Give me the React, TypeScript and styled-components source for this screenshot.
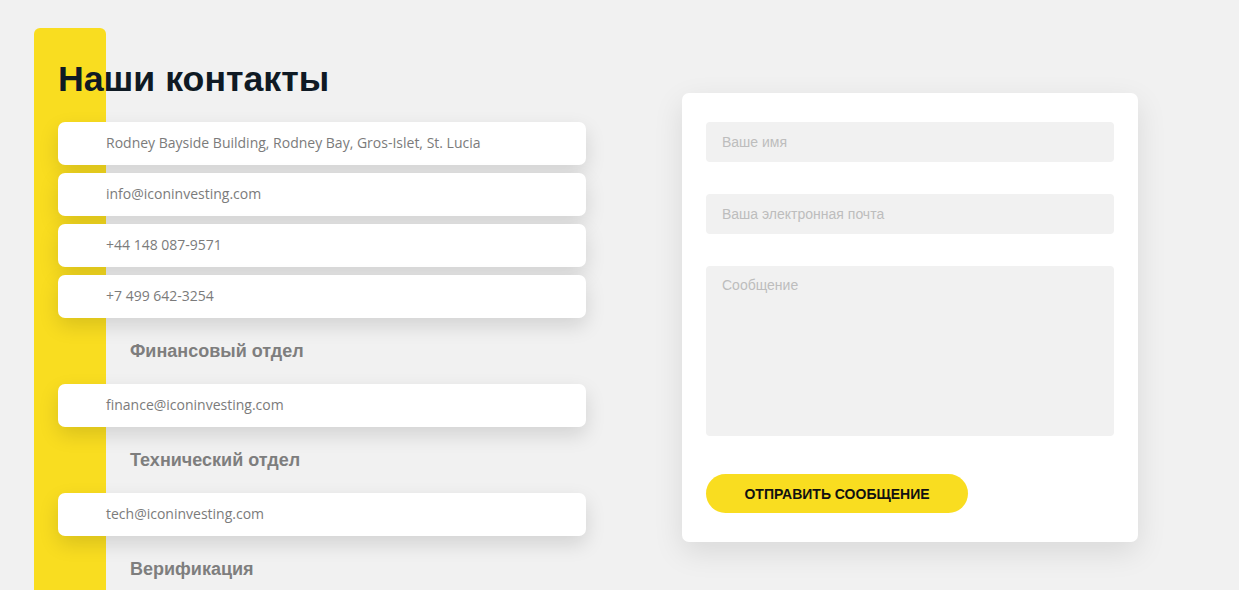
import React from 'react';
import styled, { createGlobalStyle } from 'styled-components';

const GlobalStyle = createGlobalStyle`
  html, body {
    margin: 0;
    padding: 0;
    background: #f1f1f1;
  }
  * {
    box-sizing: border-box;
  }
`;

const contacts = [
  'Rodney Bayside Building, Rodney Bay, Gros-Islet, St. Lucia',
  'info@iconinvesting.com',
  '+44 148 087-9571',
  '+7 499 642-3254',
];

const departments = [
  { title: 'Финансовый отдел', email: 'finance@iconinvesting.com' },
  { title: 'Технический отдел', email: 'tech@iconinvesting.com' },
  { title: 'Верификация', email: 'verification@iconinvesting.com' },
];

export default function App() {
  return (
    <>
      <GlobalStyle />
      <Page>
        <ContactsColumn>
          <YellowStrip />
          <ContactsContent>
            <Title>Наши контакты</Title>
            <CardList>
              {contacts.map(item => (
                <InfoCard key={item}>{item}</InfoCard>
              ))}
            </CardList>
            {departments.map(dep => (
              <React.Fragment key={dep.title}>
                <DepartmentTitle>{dep.title}</DepartmentTitle>
                <InfoCard>{dep.email}</InfoCard>
              </React.Fragment>
            ))}
          </ContactsContent>
        </ContactsColumn>

        <FormCard onSubmit={e => e.preventDefault()}>
          <Field type="text" placeholder="Ваше имя" />
          <Field type="email" placeholder="Ваша электронная почта" />
          <MessageField placeholder="Сообщение" />
          <SubmitButton type="submit">Отправить сообщение</SubmitButton>
        </FormCard>
      </Page>
    </>
  );
}

const Page = styled.div`
  display: flex;
  align-items: flex-start;
  padding: 28px 0 0 34px;
  min-height: 100vh;
`;

const ContactsColumn = styled.div`
  position: relative;
  width: 552px;
  flex-shrink: 0;
`;

const YellowStrip = styled.div`
  position: absolute;
  left: 0;
  top: 0;
  bottom: -200px;
  width: 72px;
  background: #f9dd20;
  border-radius: 6px 6px 0 0;
`;

const ContactsContent = styled.div`
  position: relative;
  z-index: 1;
  padding: 34px 0 0 24px;
`;

const Title = styled.h1`
  margin: 0 0 24px;
  font-family: 'Liberation Sans', Arial, sans-serif;
  font-size: 35.7px;
  line-height: 1;
  font-weight: 700;
  color: #0f1a24;
`;

const CardList = styled.div`
  display: flex;
  flex-direction: column;
  gap: 8px;
`;

const InfoCard = styled.div`
  display: flex;
  align-items: center;
  height: 43px;
  padding: 0 0 1px 48px;
  background: #ffffff;
  border-radius: 7px;
  box-shadow: 0 8px 20px rgba(0, 0, 0, 0.13);
  font-family: 'Open Sans', 'Noto Sans', sans-serif;
  font-size: 14px;
  color: #7b7b7b;
`;

const DepartmentTitle = styled.h3`
  display: flex;
  align-items: center;
  height: 66px;
  margin: 0;
  padding: 2px 0 0 72px;
  font-family: 'Liberation Sans', Arial, sans-serif;
  font-size: 18px;
  font-weight: 700;
  color: #7e7e7e;
`;

const FormCard = styled.form`
  display: flex;
  flex-direction: column;
  align-items: flex-start;
  width: 456px;
  margin: 65px 0 0 96px;
  padding: 29px 24px;
  background: #ffffff;
  border-radius: 7px;
  box-shadow: 0 10px 30px rgba(0, 0, 0, 0.1);
`;

const fieldStyles = `
  width: 100%;
  border: none;
  outline: none;
  background: #f1f1f1;
  border-radius: 4px;
  font-family: 'Liberation Sans', Arial, sans-serif;
  font-size: 14px;
  color: #333;
  padding: 0 16px;
  &::placeholder {
    color: #bdbdbd;
  }
`;

const Field = styled.input`
  ${fieldStyles}
  height: 40px;
  margin-bottom: 32px;
`;

const MessageField = styled.textarea`
  ${fieldStyles}
  height: 170px;
  padding-top: 11px;
  resize: none;
`;

const SubmitButton = styled.button`
  width: 262px;
  height: 39px;
  margin-top: 38px;
  border: none;
  border-radius: 20px;
  background: #f9dd20;
  font-family: 'Liberation Sans', Arial, sans-serif;
  font-size: 14px;
  font-weight: 700;
  text-transform: uppercase;
  color: #111;
  cursor: pointer;
`;
